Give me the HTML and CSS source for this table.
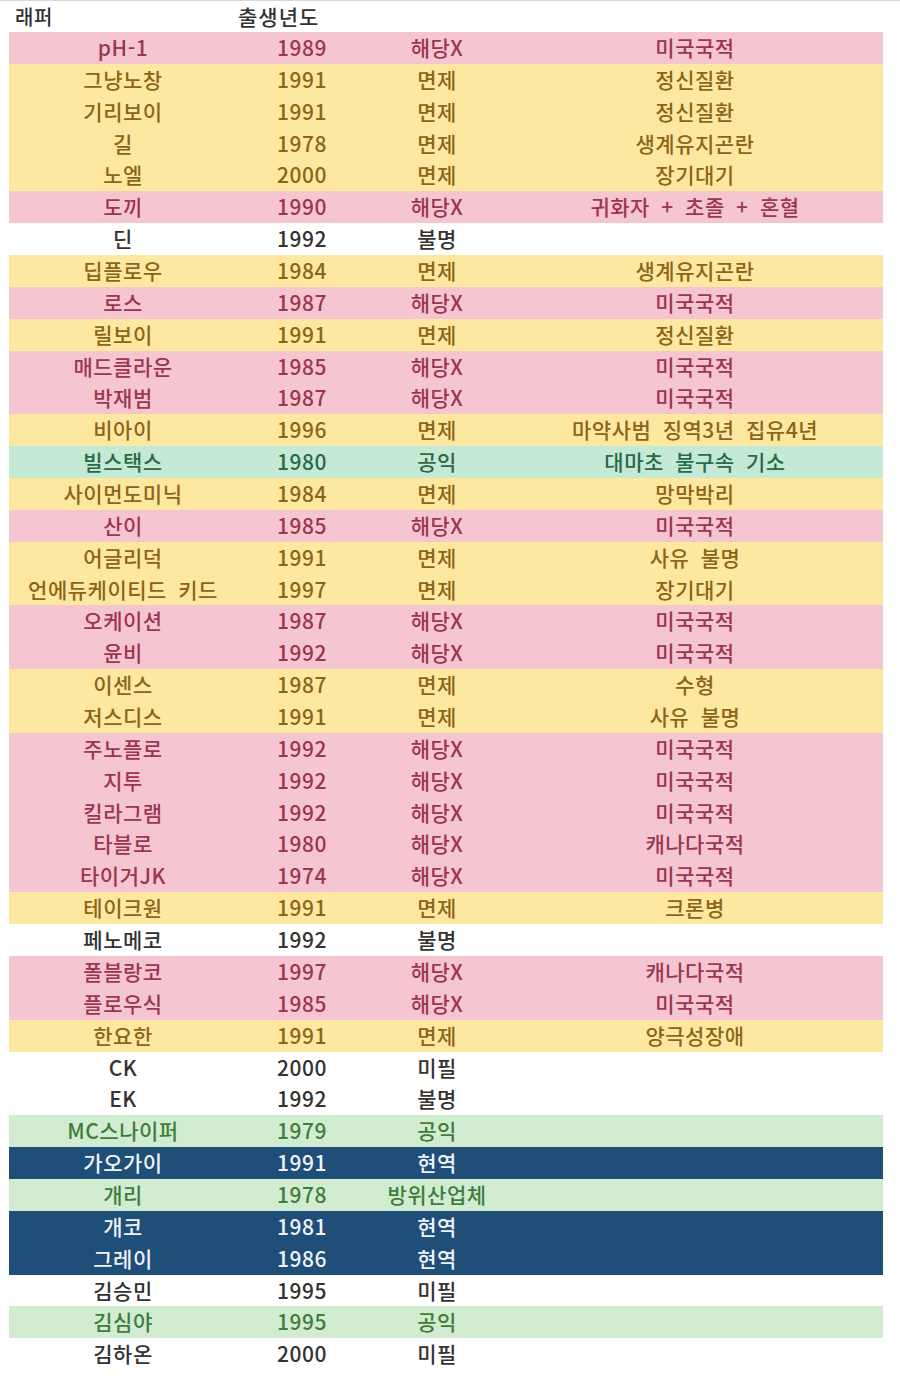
FILE: index.html
```html
<!DOCTYPE html>
<html lang="ko">
<head>
<meta charset="utf-8">
<link rel="stylesheet" href="styles.css">
</head>
<body>
<div class="sheet">
  <div class="head">
    <div class="h1">래퍼</div>
    <div class="h2">출생년도</div>
    <div></div><div></div>
  </div>
  <div class="row bad"><div>pH-1</div><div>1989</div><div>해당X</div><div>미국국적</div></div>
  <div class="row neu"><div>그냥노창</div><div>1991</div><div>면제</div><div>정신질환</div></div>
  <div class="row neu"><div>기리보이</div><div>1991</div><div>면제</div><div>정신질환</div></div>
  <div class="row neu"><div>길</div><div>1978</div><div>면제</div><div>생계유지곤란</div></div>
  <div class="row neu"><div>노엘</div><div>2000</div><div>면제</div><div>장기대기</div></div>
  <div class="row bad"><div>도끼</div><div>1990</div><div>해당X</div><div>귀화자 + 초졸 + 혼혈</div></div>
  <div class="row plain"><div>딘</div><div>1992</div><div>불명</div><div></div></div>
  <div class="row neu"><div>딥플로우</div><div>1984</div><div>면제</div><div>생계유지곤란</div></div>
  <div class="row bad"><div>로스</div><div>1987</div><div>해당X</div><div>미국국적</div></div>
  <div class="row neu"><div>릴보이</div><div>1991</div><div>면제</div><div>정신질환</div></div>
  <div class="row bad"><div>매드클라운</div><div>1985</div><div>해당X</div><div>미국국적</div></div>
  <div class="row bad"><div>박재범</div><div>1987</div><div>해당X</div><div>미국국적</div></div>
  <div class="row neu"><div>비아이</div><div>1996</div><div>면제</div><div>마약사범 징역3년 집유4년</div></div>
  <div class="row mint"><div>빌스택스</div><div>1980</div><div>공익</div><div>대마초 불구속 기소</div></div>
  <div class="row neu"><div>사이먼도미닉</div><div>1984</div><div>면제</div><div>망막박리</div></div>
  <div class="row bad"><div>산이</div><div>1985</div><div>해당X</div><div>미국국적</div></div>
  <div class="row neu"><div>어글리덕</div><div>1991</div><div>면제</div><div>사유 불명</div></div>
  <div class="row neu"><div>언에듀케이티드 키드</div><div>1997</div><div>면제</div><div>장기대기</div></div>
  <div class="row bad"><div>오케이션</div><div>1987</div><div>해당X</div><div>미국국적</div></div>
  <div class="row bad"><div>윤비</div><div>1992</div><div>해당X</div><div>미국국적</div></div>
  <div class="row neu"><div>이센스</div><div>1987</div><div>면제</div><div>수형</div></div>
  <div class="row neu"><div>저스디스</div><div>1991</div><div>면제</div><div>사유 불명</div></div>
  <div class="row bad"><div>주노플로</div><div>1992</div><div>해당X</div><div>미국국적</div></div>
  <div class="row bad"><div>지투</div><div>1992</div><div>해당X</div><div>미국국적</div></div>
  <div class="row bad"><div>킬라그램</div><div>1992</div><div>해당X</div><div>미국국적</div></div>
  <div class="row bad"><div>타블로</div><div>1980</div><div>해당X</div><div>캐나다국적</div></div>
  <div class="row bad"><div>타이거JK</div><div>1974</div><div>해당X</div><div>미국국적</div></div>
  <div class="row neu"><div>테이크원</div><div>1991</div><div>면제</div><div>크론병</div></div>
  <div class="row plain"><div>페노메코</div><div>1992</div><div>불명</div><div></div></div>
  <div class="row bad"><div>폴블랑코</div><div>1997</div><div>해당X</div><div>캐나다국적</div></div>
  <div class="row bad"><div>플로우식</div><div>1985</div><div>해당X</div><div>미국국적</div></div>
  <div class="row neu"><div>한요한</div><div>1991</div><div>면제</div><div>양극성장애</div></div>
  <div class="row plain"><div>CK</div><div>2000</div><div>미필</div><div></div></div>
  <div class="row plain"><div>EK</div><div>1992</div><div>불명</div><div></div></div>
  <div class="row good"><div>MC스나이퍼</div><div>1979</div><div>공익</div><div></div></div>
  <div class="row navy"><div>가오가이</div><div>1991</div><div>현역</div><div></div></div>
  <div class="row good"><div>개리</div><div>1978</div><div>방위산업체</div><div></div></div>
  <div class="row navy"><div>개코</div><div>1981</div><div>현역</div><div></div></div>
  <div class="row navy"><div>그레이</div><div>1986</div><div>현역</div><div></div></div>
  <div class="row plain"><div>김승민</div><div>1995</div><div>미필</div><div></div></div>
  <div class="row good"><div>김심야</div><div>1995</div><div>공익</div><div></div></div>
  <div class="row plain"><div>김하온</div><div>2000</div><div>미필</div><div></div></div>
</div>
</body>
</html>
```
FILE: styles.css
```css
html, body {
  margin: 0;
  padding: 0;
  background: #ffffff;
}
body {
  font-family: "Noto Sans CJK KR", "Noto Sans", sans-serif;
  font-size: 21px;
  font-weight: 500;
  letter-spacing: 0.5px;
  word-spacing: 5px;
  color: #262626;
  border-top: 1px solid #d8d8d8;
  width: 900px;
  height: 1388px;
  overflow: hidden;
}
.sheet {
  margin-left: 9px;
  width: 874px;
  display: flex;
  flex-direction: column;
}
.head, .row {
  display: grid;
  grid-template-columns: 228px 130px 140px 376px;
  align-items: center;
}
.head {
  height: 31px;
  color: #333;
}
.head > div {
  line-height: 31px;
}
.h1 { padding-left: 6px; font-size: 20px; }
.h2 { padding-left: 1px; font-size: 21px; letter-spacing: 1px; }
.row {
  height: 31.87px;
}
.row > div {
  text-align: center;
  line-height: 31.87px;
  white-space: nowrap;
}
.bad { background: #f6c6d0; color: #9c3552; }
.neu { background: #fde8a2; color: #8c6518; }
.mint { background: #c4e9d5; color: #2b6a46; }
.good { background: #d2ecd2; color: #3f7d3a; }
.navy { background: #1f4e78; color: #eef3f8; }
.plain { background: #ffffff; color: #333333; }
```
